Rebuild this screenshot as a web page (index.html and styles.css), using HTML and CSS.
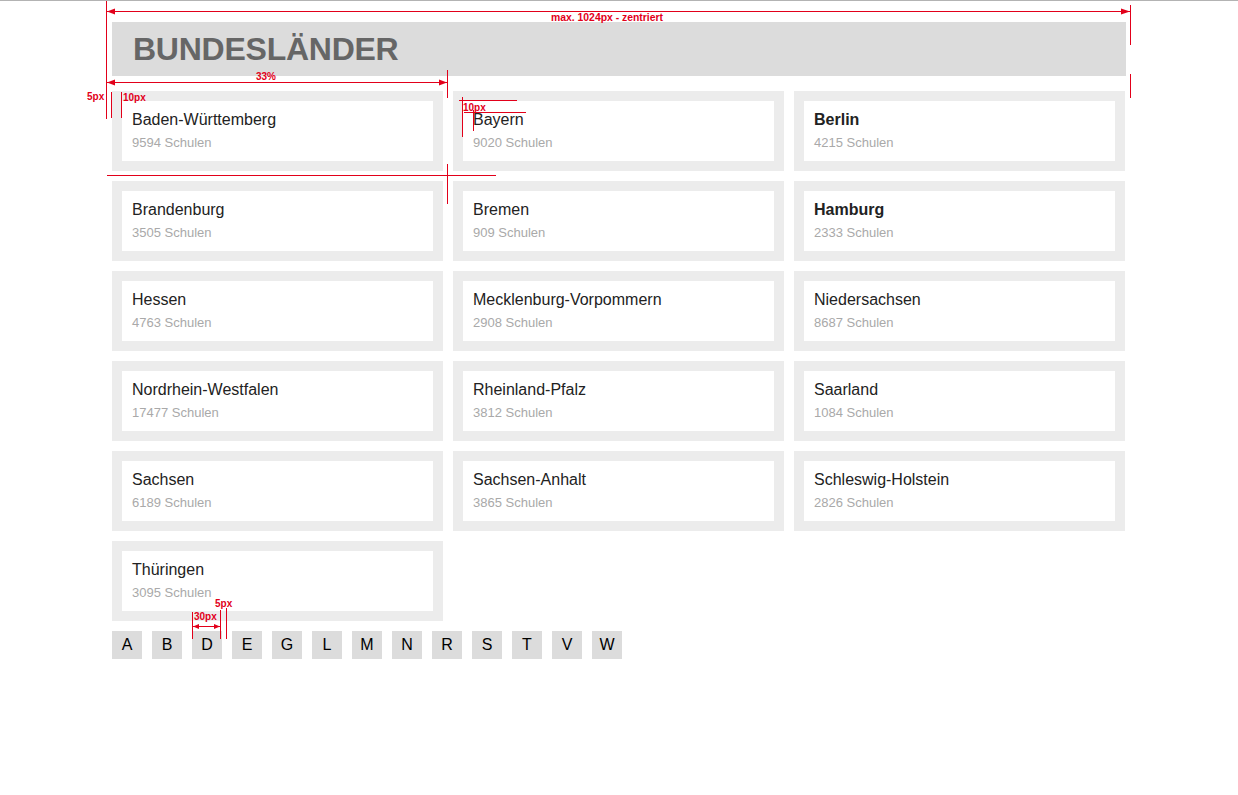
FILE: index.html
```html
<!DOCTYPE html>
<html lang="de">
<head>
<meta charset="utf-8">
<title>Bundesländer</title>
<link rel="stylesheet" href="styles.css">
</head>
<body>
<div class="page">
  <header class="header"><h1 class="title">BUNDESLÄNDER</h1></header>
  <div class="grid">
    <div class="card"><div class="card-inner"><div class="name">Baden-Württemberg</div><div class="count">9594 Schulen</div></div></div>
    <div class="card"><div class="card-inner"><div class="name">Bayern</div><div class="count">9020 Schulen</div></div></div>
    <div class="card"><div class="card-inner"><div class="name bold">Berlin</div><div class="count">4215 Schulen</div></div></div>
    <div class="card"><div class="card-inner"><div class="name">Brandenburg</div><div class="count">3505 Schulen</div></div></div>
    <div class="card"><div class="card-inner"><div class="name">Bremen</div><div class="count">909 Schulen</div></div></div>
    <div class="card"><div class="card-inner"><div class="name bold">Hamburg</div><div class="count">2333 Schulen</div></div></div>
    <div class="card"><div class="card-inner"><div class="name">Hessen</div><div class="count">4763 Schulen</div></div></div>
    <div class="card"><div class="card-inner"><div class="name">Mecklenburg-Vorpommern</div><div class="count">2908 Schulen</div></div></div>
    <div class="card"><div class="card-inner"><div class="name">Niedersachsen</div><div class="count">8687 Schulen</div></div></div>
    <div class="card"><div class="card-inner"><div class="name">Nordrhein-Westfalen</div><div class="count">17477 Schulen</div></div></div>
    <div class="card"><div class="card-inner"><div class="name">Rheinland-Pfalz</div><div class="count">3812 Schulen</div></div></div>
    <div class="card"><div class="card-inner"><div class="name">Saarland</div><div class="count">1084 Schulen</div></div></div>
    <div class="card"><div class="card-inner"><div class="name">Sachsen</div><div class="count">6189 Schulen</div></div></div>
    <div class="card"><div class="card-inner"><div class="name">Sachsen-Anhalt</div><div class="count">3865 Schulen</div></div></div>
    <div class="card"><div class="card-inner"><div class="name">Schleswig-Holstein</div><div class="count">2826 Schulen</div></div></div>
    <div class="card"><div class="card-inner"><div class="name">Thüringen</div><div class="count">3095 Schulen</div></div></div>
  </div>
  <nav class="letters">
    <a class="letter">A</a><a class="letter">B</a><a class="letter">D</a><a class="letter">E</a><a class="letter">G</a><a class="letter">L</a><a class="letter">M</a><a class="letter">N</a><a class="letter">R</a><a class="letter">S</a><a class="letter">T</a><a class="letter">V</a><a class="letter">W</a>
  </nav>
</div>

<svg class="annot" width="1238" height="795" viewBox="0 0 1238 795" xmlns="http://www.w3.org/2000/svg">
  <g stroke="#e2001a" stroke-width="1" shape-rendering="crispEdges">
    <line x1="107" y1="11.5" x2="1131" y2="11.5"/>
    <line x1="106.5" y1="0" x2="106.5" y2="119"/>
    <line x1="1130.5" y1="5" x2="1130.5" y2="45"/>
    <line x1="1130.5" y1="74" x2="1130.5" y2="98"/>
    <line x1="107" y1="82.5" x2="447" y2="82.5"/>
    <line x1="447.5" y1="70" x2="447.5" y2="98"/>
    <line x1="111.5" y1="92" x2="111.5" y2="118"/>
    <line x1="121.5" y1="92" x2="121.5" y2="118"/>
    <line x1="459" y1="100.5" x2="517" y2="100.5"/>
    <line x1="462.5" y1="97" x2="462.5" y2="137"/>
    <line x1="464" y1="112.5" x2="526" y2="112.5"/>
    <line x1="473.5" y1="110" x2="473.5" y2="131"/>
    <line x1="107" y1="175.5" x2="496" y2="175.5"/>
    <line x1="447.5" y1="164" x2="447.5" y2="204"/>
    <line x1="192.5" y1="612" x2="192.5" y2="639"/>
    <line x1="220.5" y1="610" x2="220.5" y2="639"/>
    <line x1="226.5" y1="608" x2="226.5" y2="639"/>
    <line x1="193" y1="626.5" x2="220" y2="626.5"/>
  </g>
  <g fill="#e2001a">
    <polygon points="107,11.5 115,8.5 115,14.5"/>
    <polygon points="1130,11.5 1121,8.5 1121,14.5"/>
    <polygon points="107,82.5 115,79.5 115,85.5"/>
    <polygon points="447,82.5 439,79.5 439,85.5"/>
    <polygon points="193,626.5 199,624 199,629"/>
    <polygon points="220,626.5 214,624 214,629"/>
  </g>
  <g class="annot-text" fill="#e2001a">
    <text x="607" y="21" text-anchor="middle" class="annot-wide">max. 1024px - zentriert</text>
    <text x="266" y="80" text-anchor="middle">33%</text>
    <text x="87" y="100">5px</text>
    <text x="123" y="101">10px</text>
    <text x="463" y="111">10px</text>
    <text x="215" y="607">5px</text>
    <text x="194" y="620">30px</text>
  </g>
</svg>
</body>
</html>
```
FILE: styles.css
```css
html, body {
  margin: 0;
  padding: 0;
}

body {
  border-top: 1px solid #b3b3b3;
  background: #ffffff;
  font-family: "Liberation Sans", Arial, sans-serif;
  color: #222222;
  min-height: 794px;
  position: relative;
}

.page {
  max-width: 1024px;
  margin: 0 auto;
  padding-top: 21px;
}

.header {
  margin: 0 5px 15px;
  height: 54px;
  background: #dcdcdc;
  padding-left: 21px;
}

.title {
  margin: 0;
  font-size: 32px;
  line-height: 54px;
  font-weight: bold;
  color: #666666;
  letter-spacing: -0.25px;
}

.grid {
  display: grid;
  grid-template-columns: repeat(3, 331px);
  gap: 10px;
  padding: 0 5px;
}

.card {
  background: #ececec;
  padding: 10px;
}

.card-inner {
  background: #ffffff;
  height: 60px;
  box-sizing: border-box;
  padding: 9px 10px 0;
}

.name {
  font-size: 16px;
  line-height: 20px;
  color: #222222;
}

.name.bold {
  font-weight: bold;
}

.count {
  margin-top: 5px;
  font-size: 13px;
  line-height: 15px;
  color: #a9a9a9;
}

.letters {
  display: flex;
  gap: 10px;
  padding: 0 5px;
  margin-top: 10px;
}

.letter {
  width: 30px;
  height: 28px;
  line-height: 28px;
  text-align: center;
  background: #dcdcdc;
  color: #000000;
  font-size: 16px;
}

.annot {
  position: absolute;
  left: 0;
  top: -1px;
  pointer-events: none;
}

.annot-text {
  font-family: "Liberation Sans", Arial, sans-serif;
  font-size: 10px;
  font-weight: bold;
}

.annot-wide {
  font-size: 10.4px;
}
```
